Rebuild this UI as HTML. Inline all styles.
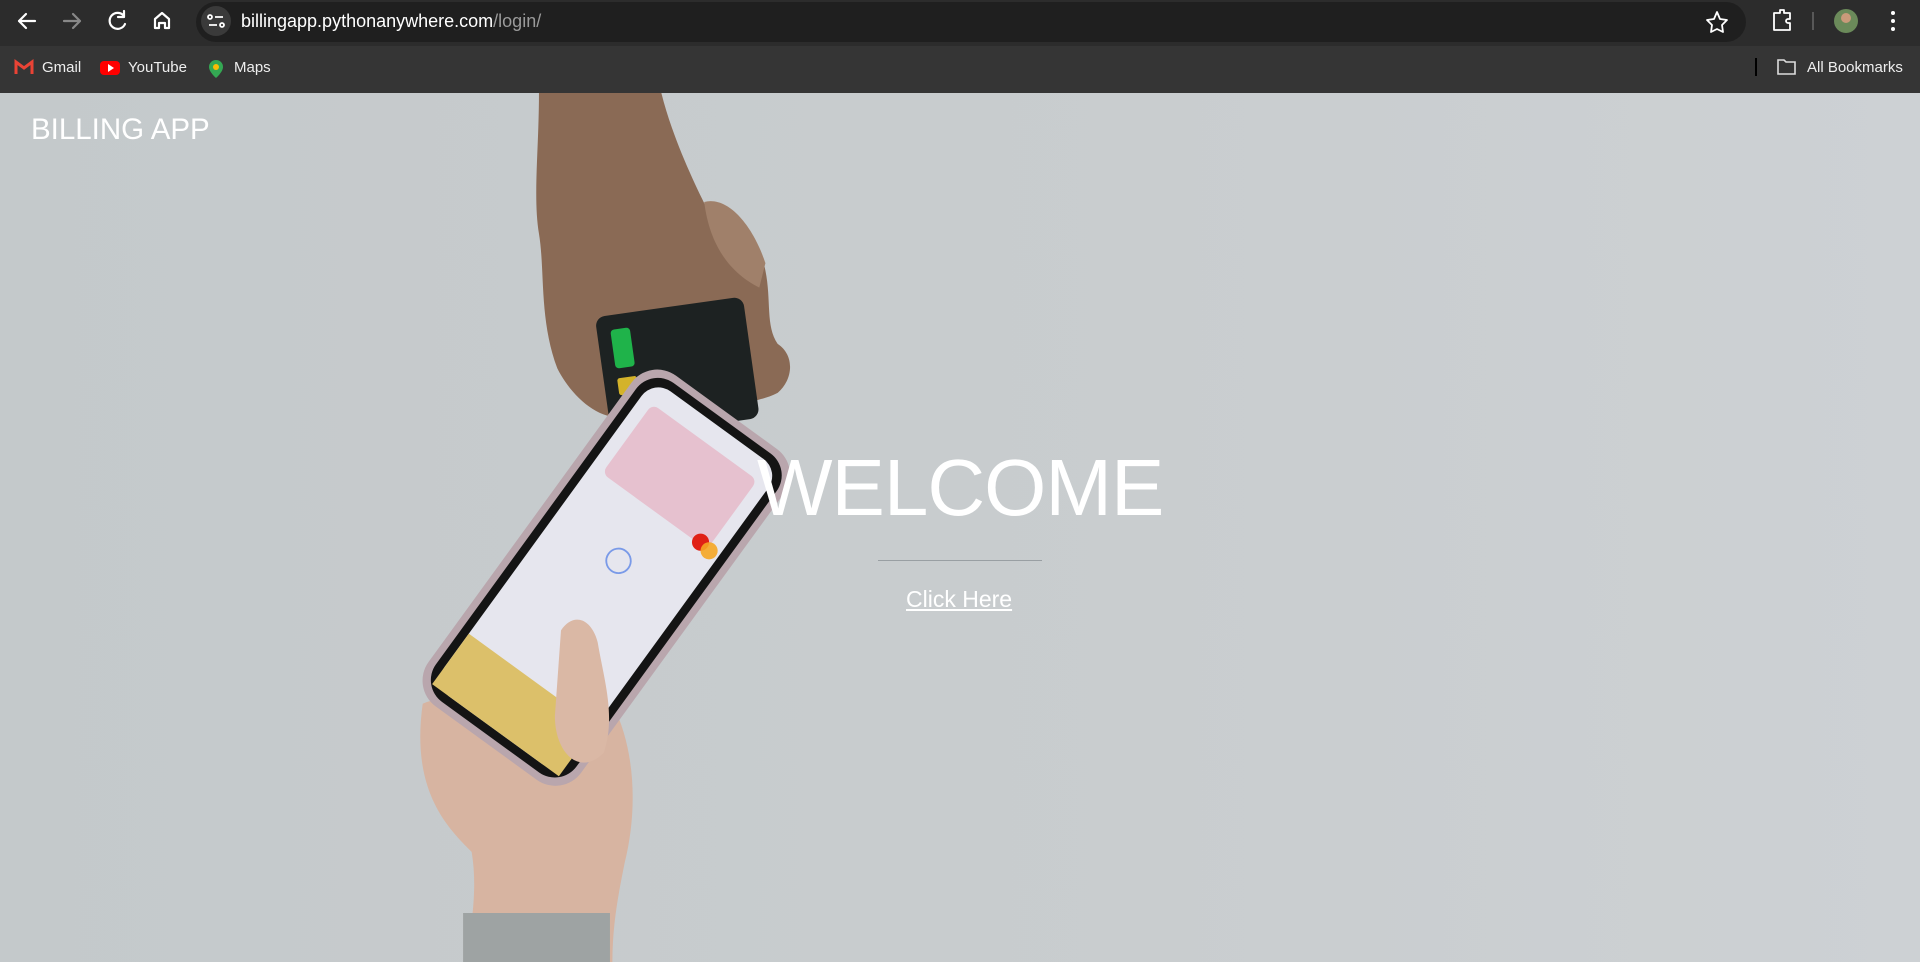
<!DOCTYPE html>
<html><head><meta charset="utf-8"><style>
*{margin:0;padding:0;box-sizing:border-box}
body{width:1920px;height:962px;overflow:hidden;font-family:"Liberation Sans",sans-serif;background:#c6cbce}
#top{position:absolute;left:0;top:0;width:1920px;height:46px;background:#2c2c2c}
#bm{position:absolute;left:0;top:46px;width:1920px;height:47px;background:#353535}
#omni{position:absolute;left:196px;top:2px;width:1550px;height:40px;border-radius:20px;background:#1f1f1f}
.url{position:absolute;left:241px;top:11px;color:#fff;font-size:18px}
.url span{color:#9a9a9a}
.bk{position:absolute;top:59px;color:#eee;font-size:15px}
#page{position:absolute;left:0;top:93px;width:1920px;height:869px;background:linear-gradient(90deg,#c4c9cb,#c9cdcf 60%,#cdd1d4)}
.brand{position:absolute;left:31px;top:113px;color:#fff;font-size:29.5px}
.wel{position:absolute;left:757px;top:442px;width:406px;text-align:center;color:#fff;font-size:80px;letter-spacing:-1px}
.hr{position:absolute;left:878px;top:560px;width:164px;height:1px;background:#999fa3}
.click{position:absolute;left:906px;top:586px;color:#fff;font-size:23px;text-decoration:underline}
</style></head><body>
<div id="top"></div><div id="omni"></div><div id="bm"></div>
<svg style="position:absolute;left:0;top:0" width="1920" height="93">
<g stroke="#fff" stroke-width="2.2" fill="none" stroke-linecap="round" stroke-linejoin="round">
<path d="M35 21H19M26 14l-7 7 7 7"/>
<path d="M64 21h16M73 14l7 7-7 7" stroke="#888"/>
<path d="M124 16a8 8 0 1 0 1 8M124 11v6h-6"/>
<path d="M155 28v-9l7-6 7 6v9h-4v-5h-6v5z"/>
<path d="M1717 12l3 7 7 1-5 5 1 7-6-3-6 3 1-7-5-5 7-1z" stroke-width="1.8"/>
<path d="M1774 13h6v-3h4v3h6v6h-2a2 2 0 0 0 0 4h2v7h-16z" stroke-width="1.8"/>
</g>
<circle cx="216" cy="21" r="15" fill="#3a3a3a"/>
<g stroke="#fff" stroke-width="1.8" fill="none"><circle cx="210" cy="17" r="2"/><path d="M215 17h8M209 25h8"/><circle cx="222" cy="25" r="2"/></g>
<line x1="1813" y1="12" x2="1813" y2="30" stroke="#666" stroke-width="1.5"/>
<circle cx="1846" cy="21" r="12" fill="#6b8a5a"/><circle cx="1846" cy="18" r="5" fill="#c99a7a"/>
<g fill="#fff"><circle cx="1893" cy="13" r="2"/><circle cx="1893" cy="21" r="2"/><circle cx="1893" cy="29" r="2"/></g>
<path d="M16 74V62l8 6 8-6v12" fill="none" stroke="#ea4335" stroke-width="3"/>
<rect x="100" y="61" width="20" height="14" rx="4" fill="#f00"/><path d="M108 64v8l6-4z" fill="#fff"/>
<path d="M216 60a7 7 0 0 1 7 7c0 5-7 11-7 11s-7-6-7-11a7 7 0 0 1 7-7z" fill="#34a853"/><circle cx="216" cy="67" r="3" fill="#fbbc04"/>
<line x1="1756" y1="58" x2="1756" y2="76" stroke="#000" stroke-width="2"/>
<path d="M1778 60h6l2 2h9v12h-17z" fill="none" stroke="#ddd" stroke-width="1.6"/>
</svg>
<div class="url">billingapp.pythonanywhere.com<span>/login/</span></div>
<div class="bk" style="left:42px">Gmail</div>
<div class="bk" style="left:128px">YouTube</div>
<div class="bk" style="left:234px">Maps</div>
<div class="bk" style="left:1807px">All Bookmarks</div>
<div id="page"></div>
<svg style="position:absolute;left:0;top:0" width="1920" height="962" viewBox="0 0 1568 786">
<path d="M440 76h100c10 40 30 80 40 100 25-5 40 20 45 45 5 25 0 45 10 60 15 10 12 30 0 40-15 8-30 5-40 20-30 10-60 0-90 0-20 0-40-20-50-40-15-40-10-80-15-110-5-30 0-70 0-115z" fill="#8a6a55"/>
<path d="M575 165c20-5 40 20 50 50l-5 20c-20-10-40-30-45-70z" fill="#a0806a"/>
<g transform="rotate(-8 555 300)"><rect x="492" y="250" width="122" height="100" rx="8" fill="#1d2222"/><rect x="503" y="262" width="16" height="32" rx="3" fill="#1fb34a"/><rect x="503" y="302" width="16" height="14" rx="2" fill="#d4b32a"/></g>
<path d="M345 575c20-10 40 10 60 20 20-40 30-80 55-80 20 0 30 30 40 60 20 40 20 90 10 130-5 25-10 50-10 81H380c5-30 10-60 5-90-20-20-50-50-40-121z" fill="#d7b4a1"/>
<path d="M378 746h120v40H378z" fill="#9ea3a3"/>
<g transform="rotate(36 495 472)">
<rect x="418" y="305" width="154" height="334" rx="26" fill="#b9a6ad"/>
<rect x="424" y="311" width="142" height="322" rx="22" fill="#141414"/>
<rect x="431" y="318" width="128" height="308" rx="17" fill="#e6e6ee"/>
<rect x="442" y="335" width="106" height="70" rx="6" fill="#e6c1cf"/>
<rect x="431" y="575" width="128" height="51" fill="#dcc06a"/>
<circle cx="495" cy="455" r="10" fill="none" stroke="#7a9ae8" stroke-width="1.5"/>
</g>
<circle cx="572" cy="443" r="7" fill="#e02015"/><circle cx="579" cy="450" r="7" fill="#f5a623" opacity=".9"/>
<path d="M458 515c10-15 25-10 30 10 5 30 15 60 5 90-20 20-40 0-40-30z" fill="#dab8a5"/>
</svg>
<div class="brand">BILLING APP</div>
<div class="wel">WELCOME</div>
<div class="hr"></div>
<div class="click">Click Here</div>
</body></html>
